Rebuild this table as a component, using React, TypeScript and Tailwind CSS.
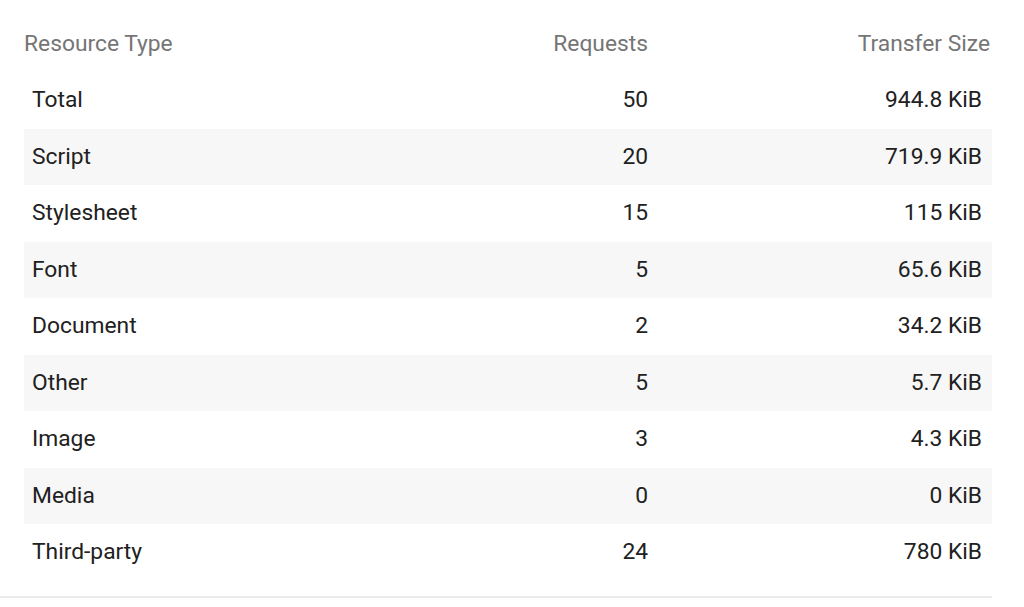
const rows = [
  { type: 'Total', requests: '50', size: '944.8 KiB' },
  { type: 'Script', requests: '20', size: '719.9 KiB' },
  { type: 'Stylesheet', requests: '15', size: '115 KiB' },
  { type: 'Font', requests: '5', size: '65.6 KiB' },
  { type: 'Document', requests: '2', size: '34.2 KiB' },
  { type: 'Other', requests: '5', size: '5.7 KiB' },
  { type: 'Image', requests: '3', size: '4.3 KiB' },
  { type: 'Media', requests: '0', size: '0 KiB' },
  { type: 'Third-party', requests: '24', size: '780 KiB' },
];

export default function App() {
  return (
    <div className="min-h-screen bg-white font-['Roboto',sans-serif] text-[22.8px]">
      <div className="w-[992px] pt-[31px]">
        <div className="pl-[24px]">
          {/* header */}
          <div className="grid grid-cols-[minmax(0,1fr)_176px_344px] leading-[26px] text-[#757575] mb-[15px]">
            <div>Resource Type</div>
            <div className="text-right">Requests</div>
            <div className="text-right pr-[2px]">Transfer Size</div>
          </div>

          {rows.map((row, i) => (
            <div
              key={row.type}
              className={`grid grid-cols-[minmax(0,1fr)_176px_344px] items-center h-[56.5px] text-[#212121] ${
                i % 2 === 1 ? 'bg-[#f7f7f7]' : 'bg-white'
              }`}
            >
              <div className="pl-[8px]">{row.type}</div>
              <div className="text-right">{row.requests}</div>
              <div className="text-right pr-[10px]">{row.size}</div>
            </div>
          ))}
        </div>
        <div className="mt-[15.5px] border-t-2 border-[#ebebeb]" />
      </div>
    </div>
  );
}
